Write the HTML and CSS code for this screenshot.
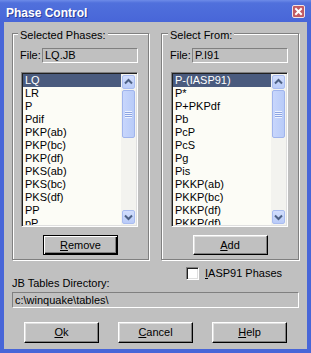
FILE: index.html
```html
<!DOCTYPE html>
<html lang="en">

<head>
    <meta charset="UTF-8">
    <title>Phase Control</title>
    <link rel="stylesheet" href="styles.css">
</head>

<body>
    <div class="window">
        <div class="titlebar">
            <span class="title">Phase Control</span>
            <span class="close">
                <svg width="13" height="13" viewBox="0 0 13 13">
                    <path d="M4 4 L9 9 M9 4 L4 9" stroke="#fff" stroke-width="2" stroke-linecap="square" fill="none"/>
                </svg>
            </span>
        </div>
        <div class="client">
            <div class="groups">
                <!-- phases already chosen -->
                <div class="group left">
                    <div class="legend">Selected Phases:</div>
                    <div class="file-row">
                        <span class="file-label">File:</span>
                        <div class="field">LQ.JB</div>
                    </div>
                    <div class="listbox">
                        <div class="items">
                            <div class="item selected">LQ</div>
                            <div class="item">LR</div>
                            <div class="item">P</div>
                            <div class="item">Pdif</div>
                            <div class="item">PKP(ab)</div>
                            <div class="item">PKP(bc)</div>
                            <div class="item">PKP(df)</div>
                            <div class="item">PKS(ab)</div>
                            <div class="item">PKS(bc)</div>
                            <div class="item">PKS(df)</div>
                            <div class="item">PP</div>
                            <div class="item">pP</div>
                        </div>
                        <div class="scrollbar">
                            <div class="sb-btn">
                                <svg width="13" height="14" viewBox="0 0 13 14"><path d="M3 8.5 L6.5 5 L10 8.5" stroke="#4d6185" stroke-width="2" fill="none"/></svg>
                            </div>
                            <div class="sb-thumb"><span class="grip"></span></div>
                            <div class="sb-track"></div>
                            <div class="sb-btn">
                                <svg width="13" height="14" viewBox="0 0 13 14"><path d="M3 5.5 L6.5 9 L10 5.5" stroke="#4d6185" stroke-width="2" fill="none"/></svg>
                            </div>
                        </div>
                    </div>
                    <div class="btn-row">
                        <button class="btn default"><u>R</u>emove</button>
                    </div>
                </div>

                <!-- phases to pick from -->
                <div class="group right">
                    <div class="legend">Select From:</div>
                    <div class="file-row">
                        <span class="file-label">File:</span>
                        <div class="field">P.I91</div>
                    </div>
                    <div class="listbox">
                        <div class="items">
                            <div class="item selected">P-(IASP91)</div>
                            <div class="item">P*</div>
                            <div class="item">P+PKPdf</div>
                            <div class="item">Pb</div>
                            <div class="item">PcP</div>
                            <div class="item">PcS</div>
                            <div class="item">Pg</div>
                            <div class="item">Pis</div>
                            <div class="item">PKKP(ab)</div>
                            <div class="item">PKKP(bc)</div>
                            <div class="item">PKKP(df)</div>
                            <div class="item">PKKP(df)</div>
                        </div>
                        <div class="scrollbar">
                            <div class="sb-btn">
                                <svg width="13" height="14" viewBox="0 0 13 14"><path d="M3 8.5 L6.5 5 L10 8.5" stroke="#4d6185" stroke-width="2" fill="none"/></svg>
                            </div>
                            <div class="sb-thumb"><span class="grip"></span></div>
                            <div class="sb-track"></div>
                            <div class="sb-btn">
                                <svg width="13" height="14" viewBox="0 0 13 14"><path d="M3 5.5 L6.5 9 L10 5.5" stroke="#4d6185" stroke-width="2" fill="none"/></svg>
                            </div>
                        </div>
                    </div>
                    <div class="btn-row">
                        <button class="btn"><u>A</u>dd</button>
                    </div>
                </div>
            </div>

            <div class="check-row">
                <span class="checkbox"></span>
                <span><u>I</u>ASP91 Phases</span>
            </div>
            <div class="dir-label">JB Tables Directory:</div>
            <div class="field dir">c:\winquake\tables\</div>

            <div class="buttons">
                <button class="btn big"><u>O</u>k</button>
                <button class="btn big"><u>C</u>ancel</button>
                <button class="btn big"><u>H</u>elp</button>
            </div>
        </div>
    </div>
</body>

</html>
```

FILE: styles.css
```css
* {
    margin: 0;
    padding: 0;
    box-sizing: border-box;
}

body {
    font-family: "Liberation Sans", Arial, sans-serif;
    font-size: 11px;
    line-height: 13px;
    color: #000;
    background: #fff;
}

.window {
    width: 311px;
    height: 353px;
    display: flex;
    flex-direction: column;
    background: #4866d8;
}

.titlebar {
    height: 22px;
    display: flex;
    justify-content: space-between;
    align-items: flex-start;
    padding: 0 6px 0 6px;
    background: linear-gradient(#6d8be8 0, #5070dc 3px, #4866d8 100%);
}

.title {
    padding-top: 6px;
    font-size: 12px;
    line-height: 14px;
    font-weight: bold;
    color: #fff;
    text-shadow: 1px 1px 0 #2a3c96;
}

.close {
    margin-top: 5px;
    width: 13px;
    height: 13px;
    display: flex;
    background: #c15a63;
    border: 1px solid #f2e4e6;
    border-radius: 2px;
}

.close svg {
    margin: -1px;
}

.client {
    flex: 1;
    margin: 0 4px 4px;
    padding: 11px 0 0 8px;
    background: #c0c0c0;
    display: flex;
    flex-direction: column;
}

.groups {
    display: flex;
    gap: 12px;
}

.group {
    width: 137px;
    display: flex;
    flex-direction: column;
    border: 1px solid #808080;
    box-shadow: 1px 1px 0 #fff, inset 1px 1px 0 #fff;
    padding: 0 7px 4px;
}

.group.right {
    width: 138px;
    padding: 0 8px 4px;
}

.legend {
    align-self: flex-start;
    margin: -5px 0 0 -2px;
    padding: 0 2px;
    background: #c0c0c0;
}

.file-row {
    margin-top: 6px;
    display: flex;
    height: 15px;
}

.file-label {
    width: 22px;
    line-height: 15px;
}

.field {
    width: 96px;
    height: 15px;
    padding-left: 2px;
    line-height: 13px;
    border: 1px solid;
    border-color: #808080 #fff #fff #808080;
    background: #c0c0c0;
}

.listbox {
    margin: 9px 0 0 1px;
    width: 117px;
    height: 155px;
    display: flex;
    overflow: hidden;
    background: #fcfcf6;
    border: 1px solid;
    border-color: #808080 #fff #fff #808080;
    box-shadow: inset 1px 1px 0 #202020, inset -1px -1px 0 #dfdfdf;
    padding: 1px;
}

.items {
    flex: 1;
    overflow: hidden;
}

.item {
    height: 13px;
    padding: 0 2px;
    white-space: nowrap;
}

.item.selected {
    background: #4a5b7e;
    color: #fff;
}

.scrollbar {
    width: 15px;
    display: flex;
    flex-direction: column;
    padding: 1px 1px 1px 1px;
    background: #f3f3ef;
}

.sb-btn {
    height: 14px;
    display: flex;
    background: linear-gradient(#d2defd, #b9cbf8);
    border: 1px solid #a9bcf0;
    border-radius: 2px;
}

.sb-btn svg {
    margin: -1px;
}

.sb-thumb {
    margin-top: 1px;
    height: 48px;
    display: flex;
    align-items: center;
    justify-content: center;
    background: linear-gradient(90deg, #c8d6fc, #b8cbf8);
    border: 1px solid #a0b4ec;
    border-radius: 2px;
}

.grip {
    width: 7px;
    height: 7px;
    background: repeating-linear-gradient(#eef3ff 0, #eef3ff 1px, #8ca4e2 1px, #8ca4e2 2px);
}

.sb-track {
    flex: 1;
}

.btn-row {
    margin-top: 8px;
    display: flex;
    justify-content: center;
}

.btn {
    width: 75px;
    height: 20px;
    font: inherit;
    color: #000;
    background: #c0c0c0;
    border: 1px solid;
    border-color: #fff #000 #000 #fff;
    box-shadow: inset -1px -1px 0 #808080, inset 1px 1px 0 #dfdfdf;
}

.btn.default {
    border-color: #000;
    box-shadow: inset 1px 1px 0 #fff, inset -1px -1px 0 #000, inset -2px -2px 0 #808080;
}

.btn.big {
    height: 21px;
}

.check-row {
    margin-top: 7px;
    padding-left: 174px;
    display: flex;
    align-items: center;
    gap: 6px;
    height: 13px;
}

.checkbox {
    width: 13px;
    height: 13px;
    background: #fff;
    border: 1px solid;
    border-color: #808080 #fff #fff #808080;
    box-shadow: inset 1px 1px 0 #202020, inset -1px -1px 0 #dfdfdf;
}

.dir-label {
    margin-top: -3px;
}

.field.dir {
    margin-top: 2px;
    width: 287px;
    height: 16px;
    line-height: 14px;
}

.buttons {
    margin-top: 14px;
    padding: 0 20px 0 12px;
    display: flex;
    justify-content: space-between;
}
```
